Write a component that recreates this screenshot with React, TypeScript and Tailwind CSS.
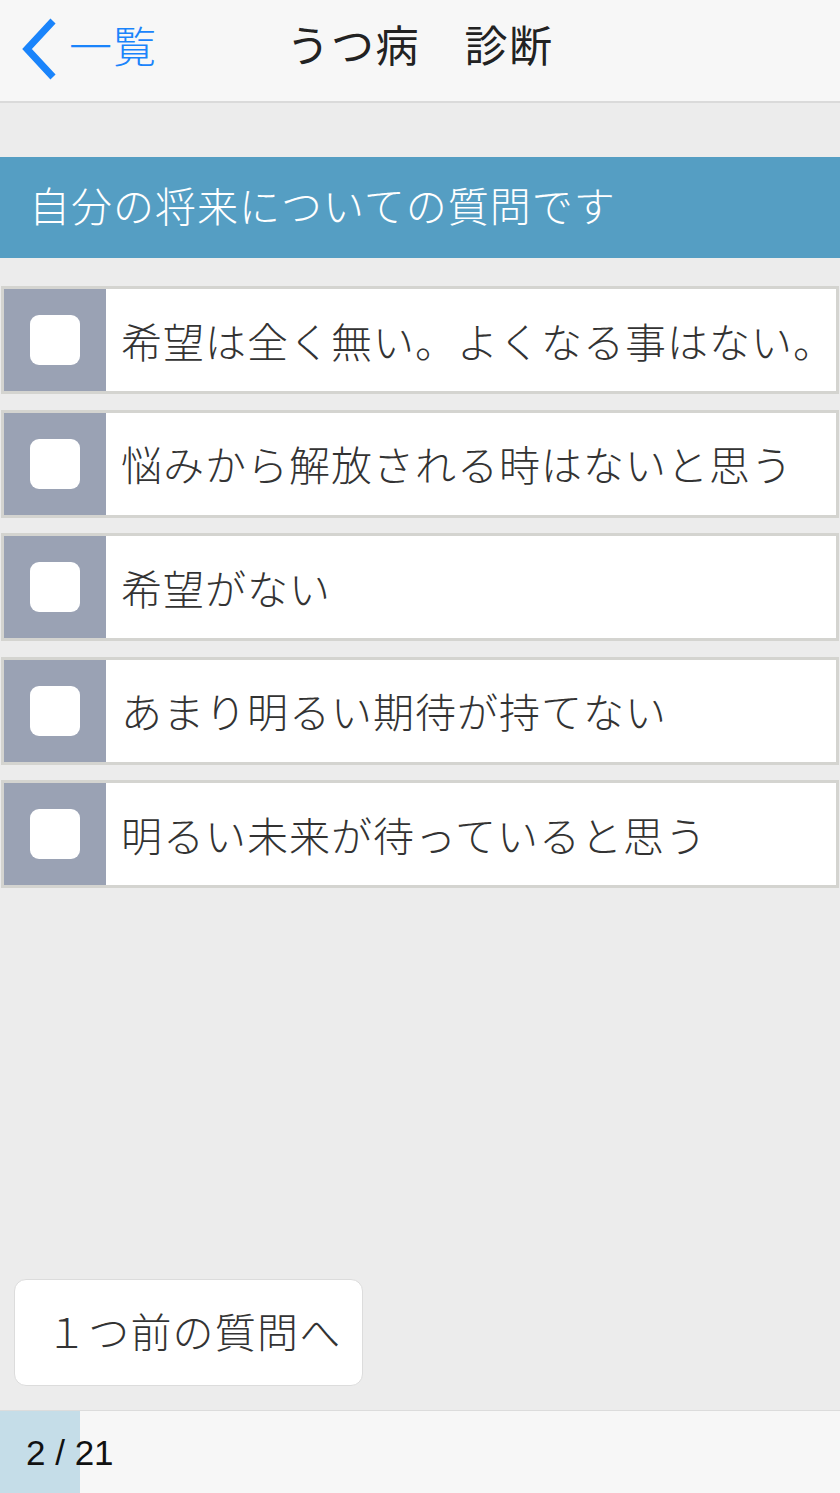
import { useState } from "react";

const jp = { fontFamily: '"Noto Sans CJK JP", "Noto Sans", sans-serif' };

const answers = [
  "希望は全く無い。よくなる事はない。",
  "悩みから解放される時はないと思う",
  "希望がない",
  "あまり明るい期待が持てない",
  "明るい未来が待っていると思う",
];

function AnswerRow({ text, checked, onToggle }: { text: string; checked: boolean; onToggle: () => void }) {
  return (
    <div
      onClick={onToggle}
      className="flex h-[108px] border-[3px] border-[#d4d4d0] bg-white cursor-pointer"
    >
      <div className="flex w-[102px] shrink-0 items-center justify-center bg-[#9aa2b4]">
        <div className="flex size-[50px] items-center justify-center rounded-[9px] bg-white text-[32px] text-[#559ec3]">
          {checked ? "✓" : ""}
        </div>
      </div>
      <div className="flex items-center pl-[15px] text-[41px] font-light leading-none text-[#333] whitespace-nowrap tracking-[1px]">
        {text}
      </div>
    </div>
  );
}

export default function App() {
  const [selected, setSelected] = useState<number | null>(null);

  return (
    <div className="flex h-[1493px] w-full flex-col bg-[#ececec]" style={jp}>
      <div className="relative flex h-[103px] shrink-0 items-center border-b-2 border-[#dadada] bg-[#f7f7f7]">
        <div className="flex items-center pl-[18px] text-[#1a84fb]">
          <svg width="44" height="64" viewBox="0 0 44 64" className="mt-[-4px]">
            <polyline
              points="35,4 9,32 35,60"
              fill="none"
              stroke="#1a84fb"
              strokeWidth="7"
              strokeLinecap="butt"
              strokeLinejoin="miter"
            />
          </svg>
          <span className="ml-[7px] mt-[-12px] text-[43px] font-light leading-none tracking-[1px]">一覧</span>
        </div>
        <div className="absolute inset-x-0 top-0 flex h-full items-center justify-center pb-[14px] text-[43px] leading-none tracking-[1.5px] text-[#222] pointer-events-none">
          うつ病　診断
        </div>
      </div>

      <div className="mt-[54px] flex h-[101px] shrink-0 items-center bg-[#559ec3] pb-[6px] pl-[29px] text-[41px] font-light leading-none tracking-[1px] text-white">
        自分の将来についての質問です
      </div>

      <div className="mt-[28px] flex flex-col gap-[15.5px] px-px">
        {answers.map((a, i) => (
          <AnswerRow
            key={a}
            text={a}
            checked={selected === i}
            onToggle={() => setSelected(selected === i ? null : i)}
          />
        ))}
      </div>

      <div className="flex-1" />

      <div className="mb-[24px] pl-[14px]">
        <button className="flex h-[107px] w-[349px] items-center rounded-[12px] border border-[#dcdcdc] bg-white pb-[4px] pl-[31px] text-[41px] font-light leading-none tracking-[1.2px] text-[#333]">
          １つ前の質問へ
        </button>
      </div>

      <div className="relative flex h-[83px] shrink-0 border-t border-[#dcdcdc] bg-[#f7f7f7]">
        <div className="h-full w-[80px] bg-[#c5dde8]" />
        <div
          className="absolute left-[26px] top-0 flex h-full items-center text-[35px] leading-none text-[#111]"
          style={{ fontFamily: '"Liberation Sans", Arial, sans-serif' }}
        >
          2 / 21
        </div>
      </div>
    </div>
  );
}
